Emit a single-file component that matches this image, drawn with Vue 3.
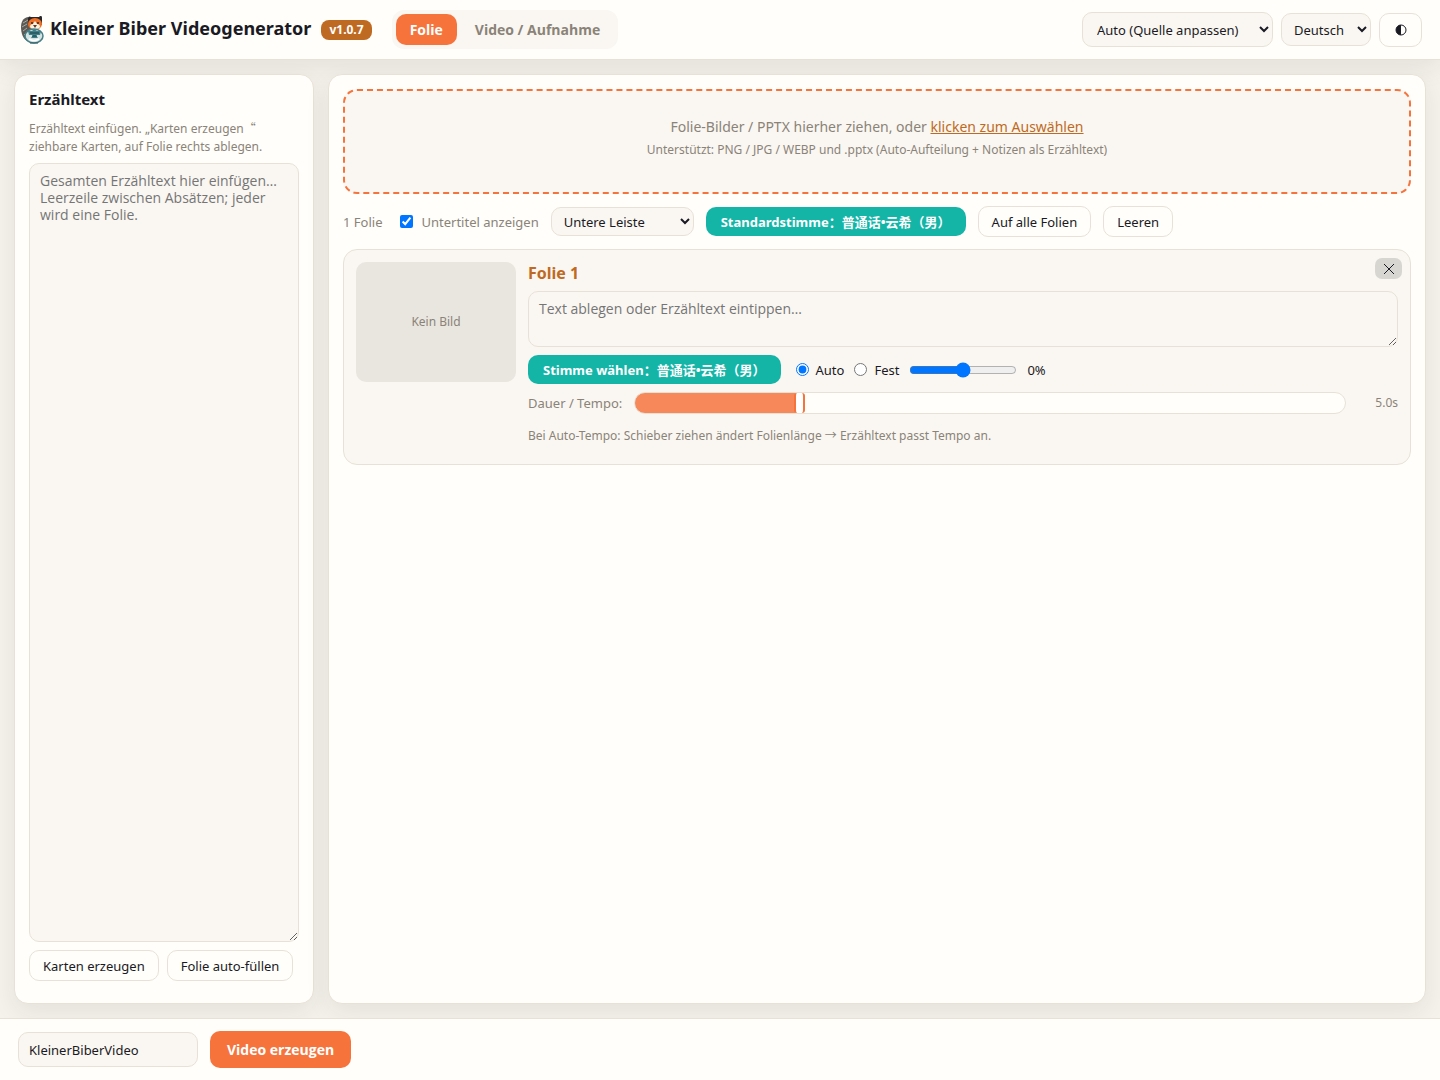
<template>
  <div class="app">
    <header class="topbar">
      <div class="brand">
        <svg class="logo" viewBox="0 0 24 28" aria-hidden="true">
          <path d="M8 1C3 2 1 6 1 11c0 6 2 12 6 14l4-5V3z" fill="#5d5a56" />
          <path d="M3 7l5-3M2 11l5-3M3 15l4-3M4 19l4-4" stroke="#a9aaa4" stroke-width="1" />
          <path d="M8 3c0-3 2-3 3-2h8c2-2 3-1 3 1v7H8z" fill="#28282a" />
          <ellipse cx="15" cy="8" rx="7" ry="6" fill="#ef7127" />
          <path d="M10 11c0-2 1-3 3-3l2-3 2 3c2 0 3 1 3 3-2 3-8 3-10 0z" fill="#fff2df" />
          <circle cx="12" cy="7" r="1" fill="#292c30" />
          <circle cx="18" cy="7" r="1" fill="#292c30" />
          <path d="M13 9h4l-2 3z" fill="#653b2c" />
          <ellipse cx="14" cy="20" rx="9" ry="7" fill="#d5e4e2" stroke="#477f87" stroke-width="1.5" />
          <path d="M8 15h4l2-2 3 2h4l-1 4h-4l2 3h-7l2-3H9z" fill="#3e8088" />
          <path d="M10 17h9M12 20h5" stroke="#173f49" stroke-width="1" />
          <path d="M9 23q5 3 10 0" fill="none" stroke="#fff" stroke-width="1.5" />
          <path d="M10 27h8" stroke="#315c65" stroke-width="1" />
        </svg>
        <h1>Kleiner Biber Videogenerator</h1>
        <span class="version">v1.0.7</span>
      </div>
      <nav class="tabs">
        <button
          v-for="tab in tabs"
          :key="tab.id"
          type="button"
          class="tab"
          :class="{ active: mode === tab.id }"
          @click="mode = tab.id"
        >{{ tab.label }}</button>
      </nav>
      <div class="top-actions">
        <select v-model="aspect" class="aspect" aria-label="Format">
          <option value="auto">Auto (Quelle anpassen)</option>
        </select>
        <select v-model="lang" class="lang" aria-label="Sprache">
          <option value="de">Deutsch</option>
        </select>
        <button type="button" class="btn theme" aria-label="Design wechseln">
          <svg viewBox="0 0 12 12" aria-hidden="true">
            <circle cx="6" cy="6" r="5" fill="none" stroke="currentColor" />
            <path d="M6 1a5 5 0 0 0 0 10z" fill="currentColor" />
          </svg>
        </button>
      </div>
    </header>

    <main class="workspace">
      <aside class="panel script-panel">
        <h2><label for="script">Erzähltext</label></h2>
        <p class="hint">
          Erzähltext einfügen. „Karten erzeugen<span class="wide-quote">“</span><br>
          ziehbare Karten, auf Folie rechts ablegen.
        </p>
        <textarea id="script" v-model="script" class="script-input" :placeholder="scriptPlaceholder"></textarea>
        <div class="script-actions">
          <button type="button" class="btn">Karten erzeugen</button>
          <button type="button" class="btn">Folie auto-füllen</button>
        </div>
      </aside>

      <section class="panel">
        <div class="dropzone">
          <p class="drop-title">Folie-Bilder / PPTX hierher ziehen, oder <a href="#">klicken zum Auswählen</a></p>
          <p class="drop-note">Unterstützt: PNG / JPG / WEBP und .pptx (Auto-Aufteilung + Notizen als Erzähltext)</p>
        </div>

        <div class="toolbar">
          <span class="muted">{{ slides.length }} Folie</span>
          <label class="check muted">
            <input v-model="subtitles" type="checkbox">
            Untertitel anzeigen
          </label>
          <select v-model="subtitleStyle" class="subtitle-style" aria-label="Untertitelstil">
            <option value="bar">Untere Leiste</option>
          </select>
          <button type="button" class="voice">Standardstimme：{{ voice }}</button>
          <button type="button" class="btn">Auf alle Folien</button>
          <button type="button" class="btn">Leeren</button>
        </div>

        <article v-for="(slide, i) in slides" :key="slide.id" class="slide">
          <div class="thumb">Kein Bild</div>
          <div class="slide-body">
            <h3>Folie {{ i + 1 }}</h3>
            <textarea
              v-model="slide.text"
              class="slide-text"
              placeholder="Text ablegen oder Erzähltext eintippen…"
              :aria-label="`Erzähltext Folie ${i + 1}`"
            ></textarea>
            <div class="voice-row">
              <button type="button" class="voice">Stimme wählen：{{ voice }}</button>
              <div class="tempo">
                <label><input v-model="slide.tempo" type="radio" value="auto">Auto</label>
                <label><input v-model="slide.tempo" type="radio" value="fixed">Fest</label>
                <input v-model.number="slide.rate" class="rate" type="range" min="-50" max="50" aria-label="Tempo">
                <span>{{ slide.rate }}%</span>
              </div>
            </div>
            <div class="duration-row">
              <label class="muted" :for="`duration-${slide.id}`">Dauer / Tempo:</label>
              <input
                :id="`duration-${slide.id}`"
                v-model.number="slide.duration"
                class="duration"
                type="range"
                min="0"
                :max="maxDuration"
                step="0.1"
                :style="{ '--fill': fill(slide.duration) }"
              >
              <output>{{ slide.duration.toFixed(1) }}s</output>
            </div>
            <p class="slide-hint">Bei Auto-Tempo: Schieber ziehen ändert Folienlänge → Erzähltext passt Tempo an.</p>
          </div>
          <button type="button" class="remove" aria-label="Folie entfernen">
            <svg viewBox="0 0 10 10" aria-hidden="true"><path d="M0 0l10 10M10 0L0 10" /></svg>
          </button>
        </article>
      </section>
    </main>

    <footer class="bottombar">
      <input v-model="fileName" class="file-name" type="text" aria-label="Dateiname">
      <button type="button" class="generate">Video erzeugen</button>
    </footer>
  </div>
</template>

<script setup>
import { ref } from 'vue'

const tabs = [
  { id: 'slides', label: 'Folie' },
  { id: 'video', label: 'Video / Aufnahme' }
]
const scriptPlaceholder = 'Gesamten Erzähltext hier einfügen…\nLeerzeile zwischen Absätzen; jeder wird eine Folie.'
const maxDuration = 22

const mode = ref('slides')
const aspect = ref('auto')
const lang = ref('de')
const script = ref('')
const subtitles = ref(true)
const subtitleStyle = ref('bar')
const voice = ref('普通话•云希（男）')
const fileName = ref('KleinerBiberVideo')
const slides = ref([
  { id: 1, text: '', tempo: 'auto', rate: 0, duration: 5 }
])

function fill(seconds) {
  return `${(seconds / maxDuration) * 100}%`
}
</script>

<style>
body {
  margin: 0;
  background: #f5f2ec;
}
</style>

<style scoped>
.app {
  --card: #fffefa;
  --soft: #faf7f2;
  --line: #e8e2d6;
  --ink: #1a1a24;
  --muted: #8a8378;
  --orange: #f6733c;
  --brown: #bf6a22;
  --teal: #14b5a7;
  display: flex;
  flex-direction: column;
  min-height: 100vh;
  color: var(--ink);
  font-family: "Noto Sans", "Noto Sans CJK SC", sans-serif;
  font-size: 13px;
  line-height: 20px;
}

.app * {
  box-sizing: border-box;
}

h1,
h2,
h3,
p {
  margin: 0;
}

button,
select,
input,
textarea {
  margin: 0;
  color: inherit;
  font: inherit;
}

button {
  cursor: pointer;
  white-space: nowrap;
}

.topbar {
  display: flex;
  align-items: center;
  gap: 20px;
  height: 60px;
  padding: 0 18px;
  border-bottom: 1px solid var(--line);
  background: var(--card);
  box-shadow: 0 8px 24px rgba(40, 35, 25, 0.08);
}

.brand {
  display: flex;
  align-items: center;
  gap: 6px;
  padding-left: 2px;
}

.logo {
  width: 24px;
  height: 28px;
}

h1 {
  padding: 0 4px 4px 0;
  font-size: 18px;
  font-weight: 700;
  line-height: 24px;
  white-space: nowrap;
}

.version {
  padding: 0 8px;
  border-radius: 8px;
  background: var(--brown);
  color: #fff;
  font-size: 12px;
  font-weight: 700;
}

.tabs {
  display: flex;
  gap: 4px;
  padding: 4px;
  border-radius: 12px;
  background: var(--soft);
}

.tab {
  height: 31px;
  padding: 0 14px;
  border: 0;
  border-radius: 10px;
  background: transparent;
  color: var(--muted);
}

.tab,
.generate {
  font-family: "Open Sans", sans-serif;
  font-size: 14px;
  font-weight: 700;
}

.tab.active {
  background: var(--orange);
  color: #fff;
}

.top-actions {
  display: flex;
  align-items: center;
  gap: 8px;
  margin-left: auto;
}

select,
textarea,
.file-name {
  border: 1px solid var(--line);
  border-radius: 10px;
  background: var(--soft);
}

.aspect {
  width: 191px;
  height: 35px;
  padding: 0 10px;
}

.lang {
  width: 90px;
  height: 33px;
  padding: 0 8px;
}

.btn {
  height: 31px;
  padding: 0 13px;
  border: 1px solid var(--line);
  border-radius: 10px;
  background: var(--card);
}

.theme {
  display: flex;
  align-items: center;
  justify-content: center;
  width: 43px;
  height: 34px;
}

.theme svg {
  flex: none;
  width: 12px;
  height: 12px;
}

.workspace {
  display: grid;
  flex: 1;
  grid-template-columns: 300px minmax(0, 1fr);
  gap: 14px;
  padding: 14px;
}

.panel {
  padding: 14px;
  border: 1px solid var(--line);
  border-radius: 14px;
  background: var(--card);
  box-shadow: 0 8px 24px rgba(40, 35, 25, 0.08);
}

.script-panel {
  display: flex;
  flex-direction: column;
}

h2 {
  margin-bottom: 11px;
  font-size: 15px;
  font-weight: 700;
}

.hint {
  margin-bottom: 7px;
  color: var(--muted);
  font-size: 12px;
  line-height: 18px;
}

.wide-quote {
  font-family: "Noto Sans CJK SC", sans-serif;
  line-height: 1;
}

textarea {
  display: block;
  width: 100%;
  padding: 8px 10px;
  font-family: "Open Sans", sans-serif;
  font-size: 14px;
  line-height: 17px;
  resize: vertical;
}

textarea::placeholder {
  color: #757575;
}

.script-input {
  flex: 1;
}

.script-actions {
  display: flex;
  gap: 8px;
  margin: 8px 0;
}

.dropzone {
  padding: 24px;
  border: 2px dashed var(--orange);
  border-radius: 14px;
  background: var(--soft);
  color: var(--muted);
  text-align: center;
}

.drop-title {
  font-size: 14px;
  line-height: 24px;
}

.drop-title a {
  color: var(--brown);
}

.drop-note {
  padding-bottom: 7px;
  font-size: 12px;
  line-height: 22px;
}

.muted {
  color: var(--muted);
}

.toolbar {
  display: flex;
  align-items: center;
  gap: 12px;
  margin: 12px 0;
}

.check {
  display: flex;
  align-items: center;
  gap: 8px;
  padding-left: 6px;
}

.check input {
  width: 13px;
  height: 13px;
}

.subtitle-style {
  width: 143px;
  height: 29px;
  padding: 0 8px;
}

.voice {
  height: 29px;
  padding: 0 15px;
  border: 0;
  border-radius: 10px;
  background: var(--teal);
  color: #fff;
  font-weight: 700;
}

.slide {
  position: relative;
  display: flex;
  align-items: flex-start;
  gap: 12px;
  padding: 12px;
  border: 1px solid var(--line);
  border-radius: 14px;
  background: var(--soft);
}

.thumb {
  display: flex;
  flex: none;
  align-items: center;
  justify-content: center;
  width: 160px;
  height: 120px;
  border-radius: 10px;
  background: #e9e6e0;
  color: var(--muted);
  font-size: 12px;
}

.slide-body {
  display: flex;
  flex: 1;
  flex-direction: column;
  gap: 8px;
}

h3 {
  padding-top: 1px;
  color: var(--brown);
  font-size: 16px;
  font-weight: 700;
  line-height: 20px;
}

.slide-text {
  height: 56px;
}

.voice-row {
  display: flex;
  align-items: center;
  gap: 15px;
}

.tempo,
.tempo label {
  display: flex;
  align-items: center;
}

.tempo {
  gap: 10px;
}

.tempo label {
  gap: 7px;
}

.tempo input[type="radio"] {
  width: 13px;
  height: 13px;
}

.rate {
  width: 108px;
}

.duration-row {
  display: flex;
  align-items: center;
  gap: 12px;
  height: 22px;
}

.duration {
  flex: 1;
  min-width: 0;
  height: 22px;
  overflow: hidden;
  border: 1px solid var(--line);
  border-radius: 11px;
  background: linear-gradient(90deg, #f78859 var(--fill), var(--card) var(--fill));
  appearance: none;
}

.duration::-webkit-slider-thumb {
  width: 11px;
  height: 20px;
  border: solid var(--orange);
  border-width: 0 2px;
  border-radius: 3px;
  background: #fff;
  appearance: none;
}

.duration-row output {
  width: 40px;
  color: var(--muted);
  font-size: 12px;
  text-align: right;
}

.slide-hint {
  padding: 5px 0 7px;
  color: var(--muted);
  font-size: 12px;
  line-height: 18px;
}

.remove {
  position: absolute;
  top: 8px;
  right: 8px;
  display: flex;
  align-items: center;
  justify-content: center;
  width: 27px;
  height: 21px;
  padding: 0;
  border: 0;
  border-radius: 7px;
  background: #d8d6d1;
}

.remove svg {
  width: 10px;
  height: 10px;
  fill: none;
  stroke: currentColor;
}

.bottombar {
  display: flex;
  align-items: center;
  gap: 12px;
  height: 62px;
  padding: 0 18px;
  border-top: 1px solid var(--line);
  background: var(--card);
}

.file-name {
  width: 180px;
  height: 35px;
  padding: 0 10px;
}

.generate {
  height: 37px;
  padding: 0 17px;
  border: 0;
  border-radius: 10px;
  background: var(--orange);
  color: #fff;
}
</style>
